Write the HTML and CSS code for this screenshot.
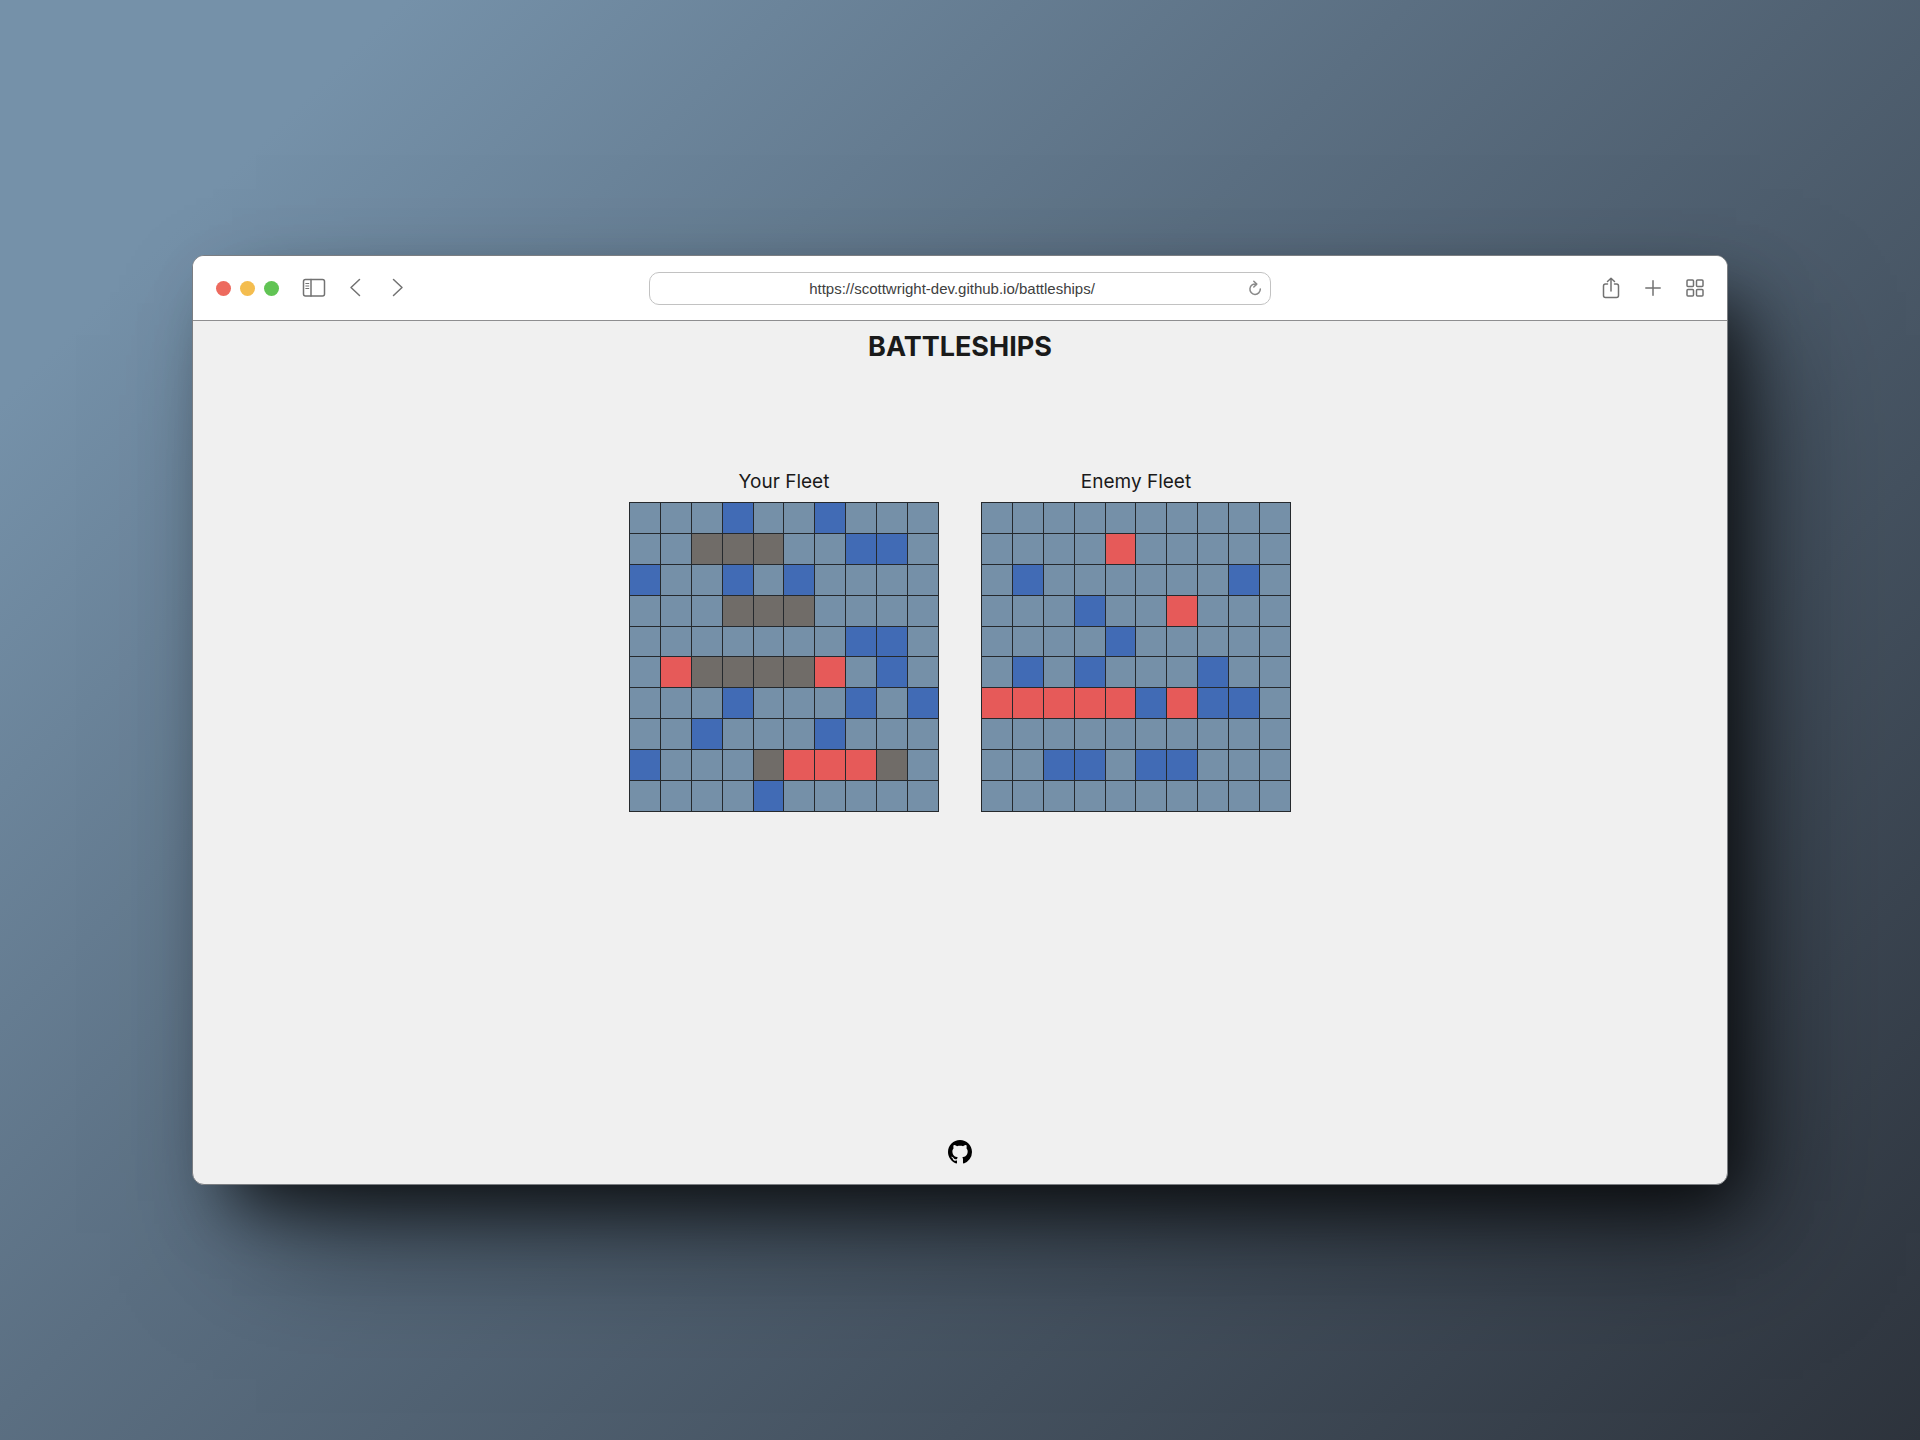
FILE: index.html
```html
<!DOCTYPE html>
<html lang="en">
<head>
<meta charset="utf-8">
<title>Battleships</title>
<link rel="stylesheet" href="styles.css">
</head>
<body>
<div class="browser">
  <header class="toolbar">
    <div class="tools">
      <div class="lights">
        <button class="light close" type="button" aria-label="Close"></button>
        <button class="light minimise" type="button" aria-label="Minimise"></button>
        <button class="light expand" type="button" aria-label="Expand"></button>
      </div>
      <button class="tool" type="button" aria-label="Sidebar">
        <svg width="24" height="20" viewBox="0 0 24 20"><rect x="1.5" y="1.5" width="21" height="16.5" rx="2"/><path d="M9 1.5V18"/><path class="fine" d="M3.8 5.5h3M3.8 8h3M3.8 10.500h3"/></svg>
      </button>
      <button class="tool" type="button" aria-label="Back">
        <svg width="12" height="20" viewBox="0 0 12 20"><path d="M10.500 1.500 2 9.500l8.500 8"/></svg>
      </button>
      <button class="tool forward" type="button" aria-label="Forward">
        <svg width="12" height="20" viewBox="0 0 12 20"><path d="M1.500 1.500 10 9.500l-8.500 8"/></svg>
      </button>
    </div>
    <form class="address">
      <input class="url" type="text" aria-label="Address" value="https://scottwright-dev.github.io/battleships/">
      <button class="reload" type="button" aria-label="Reload">
        <svg width="14" height="16" viewBox="0 0 14 16"><path d="M8.200 4.100A5.200 5.200 0 1 0 12.300 9M5.800 1.200l3 2.900-3 2.900"/></svg>
      </button>
    </form>
    <div class="tools end">
      <button class="tool" type="button" aria-label="Share">
        <svg width="18" height="22" viewBox="0 0 18 22"><path d="M5.500 7H3.500a2 2 0 0 0-2 2v9.500a2 2 0 0 0 2 2h11a2 2 0 0 0 2-2V9a2 2 0 0 0-2-2h-2M9 14V1.500M5.500 4.500 9 1.200l3.500 3.300"/></svg>
      </button>
      <button class="tool" type="button" aria-label="New tab">
        <svg width="16" height="16" viewBox="0 0 16 16"><path d="M8 .8v14.400M.8 8h14.400"/></svg>
      </button>
      <button class="tool" type="button" aria-label="Tab overview">
        <svg width="18" height="18" viewBox="0 0 18 18"><rect x="1" y="1" width="6.500" height="6.500" rx="1"/><rect x="10.500" y="1" width="6.500" height="6.500" rx="1"/><rect x="1" y="10.500" width="6.500" height="6.500" rx="1"/><rect x="10.500" y="10.500" width="6.500" height="6.500" rx="1"/></svg>
      </button>
    </div>
  </header>
  <div class="page">
    <h1 class="title">BATTLESHIPS</h1>
    <main class="fleets">
      <section class="fleet">
        <h2 class="fleet-name">Your Fleet</h2>
        <div class="board" id="player"></div>
      </section>
      <section class="fleet">
        <h2 class="fleet-name">Enemy Fleet</h2>
        <div class="board" id="enemy"></div>
      </section>
    </main>
    <footer class="footer">
      <a class="github" href="https://github.com/scottwright-dev" aria-label="GitHub">
        <svg width="24" height="24" viewBox="0 0 16 16"><path d="M8 0C3.580 0 0 3.580 0 8c0 3.540 2.290 6.530 5.470 7.590.4.070.55-.17.55-.38 0-.19-.01-.82-.01-1.490-2.010.37-2.530-.49-2.690-.94-.09-.23-.48-.94-.82-1.130-.28-.15-.68-.52-.01-.53.63-.01 1.080.58 1.230.82.72 1.210 1.870.87 2.330.66.07-.52.28-.87.51-1.070-1.780-.2-3.640-.89-3.640-3.950 0-.87.31-1.590.82-2.150-.08-.2-.36-1.020.08-2.120 0 0 .67-.21 2.200.82.64-.18 1.320-.27 2-.27s1.360.09 2 .27c1.530-1.040 2.200-.82 2.200-.82.44 1.100.16 1.920.08 2.120.51.56.82 1.270.82 2.150 0 3.070-1.870 3.750-3.650 3.950.29.25.54.73.54 1.480 0 1.070-.01 1.930-.01 2.200 0 .21.15.46.55.38A8.010 8.010 0 0 0 16 8c0-4.420-3.580-8-8-8z"/></svg>
      </a>
    </footer>
  </div>
</div>
<script src="boards.js"></script>
</body>
</html>
```

FILE: styles.css
```css
* {
  box-sizing: border-box;
}

body {
  margin: 0;
  min-height: 100vh;
  display: flex;
  align-items: center;
  justify-content: center;
  background: linear-gradient(135deg, #7591a9 0%, #7591a9 12%, #5b6f82 42%, #2d333c 100%);
  font-family: Inter, "Liberation Sans", sans-serif;
  color: #1a1a1a;
}

button {
  border: 0;
  padding: 0;
  background: none;
}

svg {
  display: block;
}

.browser {
  width: 80%;
  min-height: 930px;
  display: flex;
  flex-direction: column;
  border: 1px solid #7b7e82;
  border-radius: 12px;
  overflow: hidden;
  background: #f0f0f0;
  box-shadow:
    24px 32px 64px -16px rgba(0, 0, 0, 0.75),
    48px 64px 120px -16px rgba(0, 0, 0, 0.5);
}

.toolbar {
  display: grid;
  grid-template-columns: 1fr 622px 1fr;
  align-items: center;
  height: 65px;
  padding: 0 23px;
  background: #fff;
  border-bottom: 1px solid #8e8e90;
}

.tools {
  display: flex;
  align-items: center;
  gap: 23px;
}

.end {
  justify-content: flex-end;
  gap: 25px;
}

.forward {
  margin-left: 8px;
}

.lights {
  display: flex;
  gap: 9px;
}

.light {
  width: 15px;
  height: 15px;
  border-radius: 50%;
}

.close { background: #ed6a5e; }
.minimise { background: #f4bd4f; }
.expand { background: #61c454; }

.tool svg,
.reload svg {
  fill: none;
  stroke: #727272;
  stroke-width: 1.5;
  stroke-linecap: round;
  stroke-linejoin: round;
}

.tool .fine {
  stroke-width: 1;
}

.reload svg {
  stroke: #8a8a8a;
}

.address {
  display: flex;
  align-items: center;
  height: 33px;
  padding: 0 8px 0 6px;
  border: 1px solid #c2c2c2;
  border-radius: 10px;
}

.url {
  flex: 1;
  min-width: 0;
  padding: 0;
  border: 0;
  background: none;
  text-align: center;
  font-family: "Liberation Sans", Arial, sans-serif;
  font-size: 15px;
  color: #404040;
}

.page {
  flex: 1;
  display: flex;
  flex-direction: column;
  align-items: center;
}

.title {
  margin: 8px 0 0;
  font-size: 27px;
  line-height: 36px;
  font-weight: 700;
}

.fleets {
  display: flex;
  gap: 42px;
  margin-top: 101px;
}

.fleet {
  width: 310px;
}

.fleet-name {
  margin: 0 0 4px;
  font-size: 19px;
  line-height: 32px;
  font-weight: 400;
  text-align: center;
}

.board {
  display: grid;
  grid-template: repeat(10, 1fr) / repeat(10, 1fr);
  gap: 1px;
  height: 310px;
  padding: 1px;
  background: #25292d;
}

.water { background: #7590a8; }
.miss { background: #416bb5; }
.ship { background: #706c68; }
.hit { background: #e65a59; }

.footer {
  margin-top: auto;
  padding-bottom: 20px;
}
```

FILE: boards.js
```js
const kinds = { ".": "water", m: "miss", s: "ship", h: "hit" };

const player = [
  "...m..m...",
  "..sss..mm.",
  "m..m.m....",
  "...sss....",
  ".......mm.",
  ".hssssh.m.",
  "...m...m.m",
  "..m...m...",
  "m...shhhs.",
  "....m....."
];

const enemy = [
  "..........",
  "....h.....",
  ".m......m.",
  "...m..h...",
  "....m.....",
  ".m.m...m..",
  "hhhhhmhmm.",
  "..........",
  "..mm.mm...",
  ".........."
];

function draw(id, rows, tag) {
  const board = document.getElementById(id);
  rows.forEach((row, y) => {
    [...row].forEach((key, x) => {
      const cell = document.createElement(tag);
      cell.className = kinds[key];
      if (tag === "button") {
        cell.type = "button";
        cell.setAttribute("aria-label", "ABCDEFGHIJ"[x] + (y + 1));
      }
      board.append(cell);
    });
  });
}

draw("player", player, "div");
draw("enemy", enemy, "button");
```
